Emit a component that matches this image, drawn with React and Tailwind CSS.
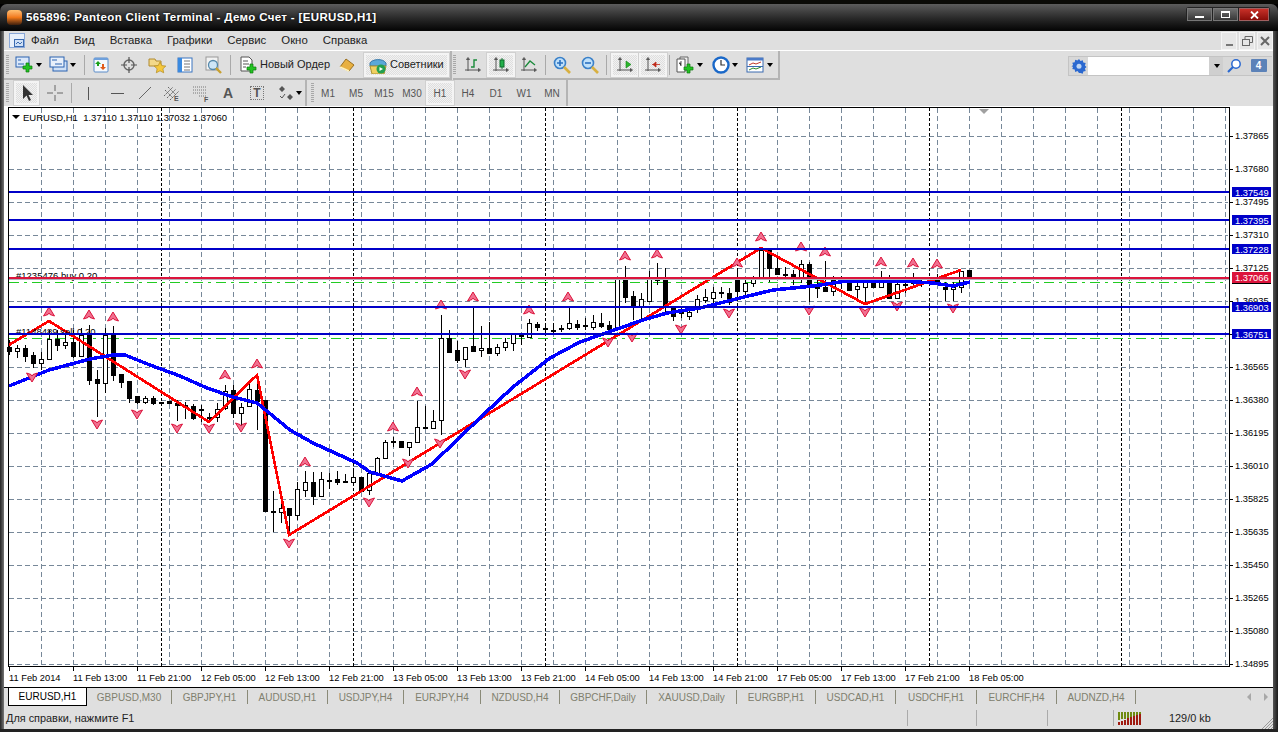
import React from "react";

// [x, bodyTop, bodyBottom, wickTop, wickBottom, black?]
const candles = [
  [9,347,351,340,355,1],[17,348,351,345,358,0],[25,348,356,345,362,1],[33,355,363,352,368,1],[41,359,363,352,370,0],
  [49,339,359,330,359,0],[57,339,345,330,351,1],[65,342,345,333,349,0],[73,342,356,330,358,1],[81,335,356,328,356,0],
  [89,335,380,325,385,1],[97,379,383,370,417,1],[105,335,383,328,393,0],[113,335,375,326,381,1],[121,374,382,374,388,1],
  [129,381,398,381,403,1],[137,396,402,396,404,1],[145,398,402,396,404,0],[153,398,403,396,405,1],[161,402,403,402,403,1],
  [169,401,403,401,403,1],[177,403,405,400,421,1],[185,405,406,402,419,1],[193,406,418,404,420,1],[201,409,410,405,422,1],
  [209,417,418,413,422,1],[217,409,417,403,422,0],[225,391,408,385,410,0],[233,390,413,385,418,1],[241,407,413,403,429,0],
  [249,389,406,382,406,0],[257,390,401,375,430,1],[265,400,511,400,511,1],[273,511,512,491,532,1],[281,508,512,498,523,0],
  [289,508,515,508,535,1],[297,489,515,482,520,0],[305,482,490,471,497,0],[313,482,496,472,505,1],[321,479,496,472,497,0],
  [329,480,481,473,489,1],[337,479,482,471,485,1],[345,481,482,474,483,1],[353,477,482,468,485,0],[361,477,491,477,491,1],
  [369,473,490,470,495,0],[377,458,473,457,473,0],[385,442,458,440,458,0],[393,441,442,437,447,0],[401,441,447,441,448,1],
  [409,442,447,442,456,0],[417,427,442,401,442,0],[425,427,428,406,428,1],[433,421,428,410,428,0],[441,338,420,315,435,0],
  [449,338,352,330,353,1],[457,350,360,341,363,1],[465,347,359,347,367,0],[473,346,351,307,351,1],[481,348,350,326,357,0],
  [489,348,353,322,353,1],[497,347,353,344,356,0],[505,342,347,338,351,0],[513,334,343,333,351,0],[521,334,336,333,345,1],
  [529,323,337,319,338,0],[537,324,327,322,331,1],[545,328,329,326,333,1],[553,330,331,323,334,1],[561,328,329,325,332,1],
  [569,323,328,308,330,0],[577,324,327,320,330,1],[585,325,326,318,330,1],[593,322,327,315,330,0],[601,323,326,313,328,1],
  [609,325,329,321,333,1],[617,278,328,278,329,0],[625,278,297,266,303,1],[633,296,306,291,320,1],[641,299,306,293,320,0],
  [649,278,301,271,302,0],[657,279,280,263,285,1],[665,279,306,268,313,1],[673,308,316,308,321,1],[681,312,313,306,318,1],
  [689,312,316,308,320,0],[697,299,307,295,313,0],[705,297,300,289,303,0],[713,292,298,287,303,0],[721,292,293,287,298,1],
  [729,293,302,288,305,1],[737,278,291,268,297,1],[745,283,291,278,295,0],[753,278,283,276,287,0],[761,250,277,248,278,0],
  [769,250,268,248,282,1],[777,268,274,258,275,1],[785,274,275,267,278,1],[793,274,279,270,285,1],[801,264,279,260,283,0],
  [809,264,285,262,302,1],[817,285,288,278,298,1],[825,287,291,261,291,1],[833,280,291,276,296,0],[841,278,281,276,289,1],
  [849,281,290,280,291,1],[857,286,289,279,298,0],[865,282,287,280,304,0],[873,283,287,278,287,1],[881,280,287,271,287,0],
  [889,280,298,275,298,1],[897,284,298,279,298,0],[905,284,285,278,293,1],[913,281,283,273,288,1],[921,282,283,277,287,1],
  [929,281,282,280,285,1],[937,280,281,274,285,1],[945,287,289,282,301,1],[953,287,289,282,301,0],[961,271,287,271,293,0],
  [969,270,278,270,283,1],
];

const zigzag = "9,345 49,321 209,422 257,375 289,535 761,248 865,304 961,270";
const ma = "9,386 49,370 90,359 113,355 125,355 150,365 180,376 207,388 233,397 257,403 290,430 313,443 357,463 370,472 402,481 432,464 457,440 483,415 513,387 550,358 580,342 600,335 620,328 643,320 667,313 700,308 740,298 773,290 813,286 847,281 900,281 933,283 953,286 970,282";

const upMarks = [[49,312],[89,315],[113,317],[225,375],[257,364],[305,462],[393,427],[417,392],[441,305],[473,297],[529,310],[568,297],[625,256],[657,254],[737,263],[761,237],[801,247],[825,252],[881,262],[913,263],[937,264]];
const downMarks = [[32,377],[97,424],[137,414],[177,428],[209,428],[241,427],[289,543],[369,502],[408,463],[440,443],[465,374],[608,342],[632,337],[681,329],[729,313],[809,310],[865,312],[897,306],[953,308]];

const axisLabels = ["1.37865","1.37680","1.37495","1.37310","1.37125","1.36935","1.36750","1.36565","1.36380","1.36195","1.36010","1.35825","1.35635","1.35450","1.35265","1.35080","1.34895"];
const timeLabels = ["11 Feb 2014","11 Feb 13:00","11 Feb 21:00","12 Feb 05:00","12 Feb 13:00","12 Feb 21:00","13 Feb 05:00","13 Feb 13:00","13 Feb 21:00","14 Feb 05:00","14 Feb 13:00","14 Feb 21:00","17 Feb 05:00","17 Feb 13:00","17 Feb 21:00","18 Feb 05:00"];
const priceLines = [[192,"1.37549"],[220,"1.37395"],[249,"1.37228"],[307,"1.36903"],[334,"1.36751"]];

const tabs = [
  ["GBPUSD,M30","w-[85px]"],["GBPJPY,H1","w-[76px]"],["AUDUSD,H1","w-[80px]"],["USDJPY,H4","w-[76px]"],["EURJPY,H4","w-[77px]"],
  ["NZDUSD,H4","w-[79px]"],["GBPCHF,Daily","w-[87px]"],["XAUUSD,Daily","w-[90px]"],["EURGBP,H1","w-[79px]"],["USDCAD,H1","w-[80px]"],
  ["USDCHF,H1","w-[81px]"],["EURCHF,H4","w-[80px]"],["AUDNZD,H4","w-[79px]"],
];

const Chart = () => {
  const gridY = axisLabels.map((_, i) => 136 + i * 33);
  const gridX = Array.from({ length: 38 }, (_, i) => 41 + i * 32);
  const dayX = [161, 353, 545, 737, 929, 1121];
  return (
    <svg width="1269" height="581" viewBox="4 106 1269 581" className="block bg-white">
      <g shapeRendering="crispEdges">
        {gridY.map((y) => (
          <line key={y} x1="9" x2="1228" y1={y + 0.5} y2={y + 0.5} stroke="#778899" strokeDasharray="5 3" />
        ))}
        {gridX.map((x) => (
          <line key={x} x1={x + 0.5} x2={x + 0.5} y1="108" y2="666" stroke="#778899" strokeDasharray="5 3" />
        ))}
        {dayX.map((x) => (
          <line key={x} x1={x + 0.5} x2={x + 0.5} y1="108" y2="666" stroke="#000" strokeDasharray="3 2" />
        ))}
        <line x1="9" x2="1228" y1="282.5" y2="282.5" stroke="#22cc22" strokeDasharray="10 5 3 5" />
        <line x1="9" x2="1228" y1="338.5" y2="338.5" stroke="#22cc22" strokeDasharray="10 5 3 5" />
        {candles.map(([x, t, b, wt, wb, black]) => (
          <g key={x}>
            <line x1={x + 0.5} x2={x + 0.5} y1={wt} y2={wb} stroke="#000" />
            <rect x={x - 2 + 0.5} y={t + 0.5} width="4" height={Math.max(b - t, 1)} fill={black ? "#000" : "#fff"} stroke="#000" />
          </g>
        ))}
        <polyline points={zigzag} fill="none" stroke="#ff0000" strokeWidth="2.7" />
        <polyline points={ma} fill="none" stroke="#0000ff" strokeWidth="3.5" />
      </g>
      {upMarks.map(([x, y]) => (
        <path key={x} transform={`translate(${x} ${y})`} d="M0 -5 L5.500 4 L1 2.500 L0 1 L-1 2.500 L-5.500 4Z" fill="#f07090" stroke="#dc143c" strokeWidth="1" strokeLinejoin="round" />
      ))}
      {downMarks.map(([x, y]) => (
        <path key={x} transform={`translate(${x} ${y})`} d="M0 5 L5.500 -4 L1 -2.500 L0 -1 L-1 -2.500 L-5.500 -4Z" fill="#f07090" stroke="#dc143c" strokeWidth="1" strokeLinejoin="round" />
      ))}
      <g fontFamily="'Liberation Sans', sans-serif" fontSize="9.5" fill="#000">
        <text x="16" y="279">#1235476 buy 0.20</text>
        <text x="16" y="335">#1148489 sell 0.20</text>
        <path d="M12 115h8l-4 4z" fill="#000" />
        <text x="23" y="120.500" xmlSpace="preserve">EURUSD,H1  1.37110 1.37110 1.37032 1.37060</text>
      </g>
      <path d="M979 109h10l-5 5z" fill="#a0a0a0" />
      <g shapeRendering="crispEdges">
        {priceLines.map(([y]) => (
          <rect key={y} x="9" y={y - 1} width="1220" height="2" fill="#0000c8" />
        ))}
        <rect x="9" y="277" width="1220" height="2" fill="#dc143c" />
        <rect x="9" y="279" width="1220" height="1" fill="#b0b0b8" />
        <rect x="8.500" y="107.500" width="1221" height="559" fill="none" stroke="#000" />
        {gridY.map((y) => (
          <line key={y} x1="1229" x2="1233" y1={y + 0.5} y2={y + 0.5} stroke="#000" />
        ))}
        {timeLabels.map((_, i) => (
          <line key={i} x1={9.5 + i * 64} x2={9.5 + i * 64} y1="667" y2="671" stroke="#000" />
        ))}
      </g>
      <g fontFamily="'Liberation Sans', sans-serif" fontSize="9.3" fill="#000">
        {axisLabels.map((t, i) => (
          <text key={t} x="1235" y={gridY[i] + 3}>{t}</text>
        ))}
        {timeLabels.map((t, i) => (
          <text key={t} x={9 + i * 64} y="681">{t}</text>
        ))}
      </g>
      {priceLines.map(([y, t]) => (
        <g key={y}>
          <rect x="1232" y={y - 5} width="39" height="10" fill="#0000c8" shapeRendering="crispEdges" />
          <text x="1235" y={y + 3.5} fill="#fff" fontFamily="'Liberation Sans', sans-serif" fontSize="9.3">{t}</text>
        </g>
      ))}
      <rect x="1232" y="272" width="39" height="11" fill="#dc143c" shapeRendering="crispEdges" />
      <rect x="1232" y="283" width="39" height="1" fill="#000" shapeRendering="crispEdges" />
      <text x="1235" y="281" fill="#fff" fontFamily="'Liberation Sans', sans-serif" fontSize="9.3">1.37066</text>
    </svg>
  );
};

const Caret = () => <span className="w-0 h-0 border-x-[3.5px] border-t-[4px] border-x-transparent border-t-black ml-[2px]" />;
const Grip = ({ className = "mr-[3px]" }) => (
  <div className={`w-[3px] h-[20px] shrink-0 bg-[repeating-linear-gradient(#a8a8a8_0_1px,transparent_1px_2px)] ${className}`} />
);
const Sep = ({ className }) => <div className={`w-[1px] h-[20px] shrink-0 bg-[#a9a9a9] ${className}`} />;

const Btn = ({ className = "w-[28px]", active, children }) => (
  <div className={`h-[24px] flex items-center justify-center shrink-0 text-[#555] text-[10px] ${active ? "bg-[repeating-conic-gradient(#f2f2f2_0_25%,#dedede_0_50%)] bg-[length:2px_2px] border-2 border-[#f4f4f4] outline-1 outline-[#d0d0d0]" : ""} ${className}`}>
    {children}
  </div>
);

const Ico = ({ w = 18, h = 18, children }) => (
  <svg width={w} height={h} viewBox={`0 0 ${w} ${h}`} className="shrink-0">{children}</svg>
);

const Plus = ({ x = 9, y = 8 }) => (
  <path transform={`translate(${x} ${y})`} d="M3 0h3v3h3v3h-3v3h-3v-3h-3v-3h3z" fill="#22c322" stroke="#0c7a0c" strokeWidth="0.7" />
);

const Axes = ({ children }) => (
  <Ico>
    <path d="M4 2v13M1 14h15M4 1.500l-1.500 2h3zM16.500 14l-2-1.500v3z" stroke="#555" fill="none" strokeWidth="1" />
    {children}
  </Ico>
);

const Toolbar1 = () => (
  <div className="h-[29px] shrink-0 flex items-center">
    <div className="h-[29px] flex items-center border-r-2 border-b-2 border-[#b4b4b4] pl-[2px] pr-[1px]">
      <Grip />
      <Btn className="w-[33px]">
        <Ico w={19}><rect x="1" y="1" width="13" height="10" fill="#dbe8fa" stroke="#2b62b0" /><path d="M3 4h3M3 8h6" stroke="#2b62b0" /><Plus x={8} y={7} /></Ico><Caret />
      </Btn>
      <Btn className="w-[34px]">
        <Ico w={19}><rect x="4" y="5" width="14" height="10" fill="#cfe0f6" stroke="#2b62b0" /><rect x="1" y="1" width="14" height="10" fill="#e8f0fb" stroke="#2b62b0" /><path d="M3 4h5M6 8h7" stroke="#2b62b0" /></Ico><Caret />
      </Btn>
      <Sep className="ml-[5px] mr-[2px]" />
      <Btn>
        <Ico><rect x="2" y="2" width="14" height="14" rx="1" fill="#f4f8fd" stroke="#5b8cc8" /><rect x="2" y="2" width="14" height="2" fill="#6ea0dc" /><path d="M6 5l3 3H7v2H5V8H3z" fill="#1aa01a" /><path d="M11 14l-3-3h2V8h2v3h2z" fill="#e05a1a" /></Ico>
      </Btn>
      <Btn>
        <Ico><circle cx="9" cy="9" r="5" fill="none" stroke="#666" strokeWidth="1.400" /><path d="M9 1v6M9 11v6M1 9h6M11 9h6" stroke="#555" strokeWidth="1.200" /></Ico>
      </Btn>
      <Btn>
        <Ico><path d="M1 3h6l1 2h5v5H1z" fill="#f3d98a" stroke="#b08a30" /><path d="M12 6l1.800 3.600 4 .5-2.900 2.700.8 4-3.700-2-3.700 2 .8-4-2.900-2.700 4-.5z" fill="#f6c83c" stroke="#b08a20" strokeWidth="0.7" /></Ico>
      </Btn>
      <Btn>
        <Ico><rect x="2" y="2" width="14" height="14" fill="#fff" stroke="#3a74c0" /><rect x="2" y="2" width="4" height="14" fill="#3a8ae0" /><path d="M8 5h6M8 8h6M8 11h6M8 14h6" stroke="#777" /></Ico>
      </Btn>
      <Btn>
        <Ico><rect x="2" y="1" width="12" height="13" fill="#f2f2f2" stroke="#999" /><circle cx="9" cy="9" r="4.500" fill="#cfe6f7" stroke="#5588aa" strokeWidth="1.300" /><path d="M12 12l5 5" stroke="#c8a030" strokeWidth="2.400" /></Ico>
      </Btn>
      <Sep className="ml-[3px] mr-[4px]" />
      <Btn className="w-[97px] justify-start !text-[#222] !text-[11px] pl-[4px] gap-[3px] whitespace-nowrap">
        <Ico w={18}><path d="M2 1h8l3 3v11H2z" fill="#fff" stroke="#555" /><path d="M4 5h5M4 8h6M4 11h3" stroke="#555" /><Plus x={8} y={8} /></Ico>
        <span>Новый Ордер</span>
      </Btn>
      <Btn className="w-[30px]">
        <Ico><path d="M2 11L8 3l8 6-5 6z" fill="#e8b040" stroke="#9a7020" /><path d="M2 11l9 4" stroke="#fff3c0" strokeWidth="1.500" /></Ico>
      </Btn>
      <Btn active className="w-[85px] ml-[2px] justify-start pl-[2px] gap-[2px] !text-[#222] !text-[11px] whitespace-nowrap">
        <Ico w={20}><path d="M2 7c2-4 13-5 16 0v3H2z" fill="#5aa8d8" stroke="#3a78a8" /><path d="M2 10h16l-2 8H4z" fill="#f0d060" stroke="#a89030" /><circle cx="13" cy="13" r="4.500" fill="#22a050" /><path d="M11.500 11l3.500 2-3.500 2z" fill="#fff" /></Ico>
        <span>Советники</span>
      </Btn>
    </div>
    <div className="h-[29px] flex items-center border-r-2 border-b-2 border-[#b4b4b4] ml-[1px] pr-[2px]">
      <Grip />
      <Btn><Axes><path d="M7 11h3V4h3" stroke="#1a8a3a" fill="none" strokeWidth="1.400" /></Axes></Btn>
      <Btn active><Axes><path d="M10 2v11" stroke="#1a7a3a" /><rect x="8" y="4" width="4" height="7" fill="#22b04a" stroke="#0c6a2a" /></Axes></Btn>
      <Btn><Axes><path d="M5 11l5-6 5 4" stroke="#1a8a3a" fill="none" strokeWidth="1.300" /></Axes></Btn>
      <Sep className="ml-[2px] mr-[2px]" />
      <Btn>
        <Ico><circle cx="7" cy="7" r="5.500" fill="#bfe0fa" stroke="#3a80c8" strokeWidth="1.600" /><path d="M4 7h6M7 4v6" stroke="#2a70c0" strokeWidth="1.600" /><path d="M11 11l6 6" stroke="#d8b040" strokeWidth="2.600" /></Ico>
      </Btn>
      <Btn>
        <Ico><circle cx="7" cy="7" r="5.500" fill="#bfe0fa" stroke="#3a80c8" strokeWidth="1.600" /><path d="M4 7h6" stroke="#2a70c0" strokeWidth="1.600" /><path d="M11 11l6 6" stroke="#d8b040" strokeWidth="2.600" /></Ico>
      </Btn>
      <Sep className="ml-[2px] mr-[4px]" />
      <Btn active><Axes><path d="M10 5v7l5-3.500z" fill="#2ab82a" stroke="#14801a" strokeWidth="0.6" /></Axes></Btn>
      <Btn active><Axes><path d="M8 8.500h8M9 8.500l3-2.500v5z" stroke="#c02a1a" fill="#c02a1a" strokeWidth="0.8" /></Axes></Btn>
      <Sep className="ml-[2px] mr-[2px]" />
      <Btn className="w-[34px]">
        <Ico w={20}><path d="M5 1h8v13H5z" fill="#eee" stroke="#666" /><path d="M2 3h8v13H2z" fill="#fff" stroke="#555" /><path d="M4 7h2v3M6 5v2" stroke="#555" /><Plus x={9} y={8} /></Ico><Caret />
      </Btn>
      <Btn className="w-[34px] ml-[2px]">
        <Ico><circle cx="9" cy="9" r="7.500" fill="#fff" stroke="#1a68c8" strokeWidth="2.400" /><path d="M9 4v5h4" stroke="#333" fill="none" strokeWidth="1.200" /></Ico><Caret />
      </Btn>
      <Btn className="w-[34px]">
        <Ico w={19}><rect x="1" y="2" width="16" height="14" fill="#fff" stroke="#3a6ab0" /><rect x="1" y="2" width="16" height="2.500" fill="#4a7ac8" /><path d="M3 9l4-2 3 1 5-2" stroke="#c03a2a" fill="none" /><path d="M3 14l4-2 3 1 5-2" stroke="#2a8a2a" fill="none" /><path d="M1 10.500h16" stroke="#3a6ab0" /></Ico><Caret />
      </Btn>
    </div>
    <div className="ml-auto mr-[1px] flex items-stretch h-[20px] border-y border-[#c4c4c4] bg-[#d8d8d8]">
      <div className="w-[20px] flex items-center justify-center border-l border-[#c4c4c4]">
        <Ico w={16} h={16}><path d="M8 1l1.500 2 2.300-.8.5 2.400 2.400.5-.8 2.400 1.600 1.500-1.600 1.500.8 2.400-2.400.5-.5 2.300-2.300-.8L8 15l-1.500-1.900-2.300.8-.5-2.300-2.400-.5.8-2.400L.5 8.600 2.100 7.100l-.8-2.400 2.400-.5.5-2.400 2.300.8z" fill="#2a68d0" /><circle cx="8" cy="8.300" r="2.500" fill="#bcd4f4" /></Ico>
      </div>
      <div className="w-[121px] bg-white" />
      <div className="w-[14px] flex items-center justify-center bg-[#cfcfcf]"><Caret /></div>
      <div className="w-[20px] ml-[1px] flex items-center justify-center">
        <Ico w={16} h={16}><circle cx="10" cy="6" r="4.200" fill="#fff" stroke="#2a68d0" strokeWidth="1.500" /><path d="M7 9l-5 5" stroke="#2a68d0" strokeWidth="2.200" /></Ico>
      </div>
      <div className="w-[27px] ml-[1px] flex items-center justify-center">
        <div className="relative w-[16px] h-[13px] bg-[#5c82b8] text-white text-[10px] font-bold flex items-center justify-center rounded-[1px]">4</div>
      </div>
    </div>
  </div>
);

const periods = ["M1", "M5", "M15", "M30", "H1", "H4", "D1", "W1", "MN"];

const Toolbar2 = () => (
  <div className="h-[26px] shrink-0 flex items-center">
    <div className="h-[26px] flex items-center border-r-2 border-[#b4b4b4] pl-[2px] pr-[1px]">
      <Grip />
      <Btn active className="w-[25px] ml-[2px]">
        <Ico w={14} h={18}><path d="M3 1v14l3.500-3.500 2.500 5.500 2-1-2.500-5h4.500z" fill="#333" /></Ico>
      </Btn>
      <Btn className="w-[31px]">
        <Ico w={16} h={16}><path d="M8 0v6M8 10v6M0 8h6M10 8h6" stroke="#666" /></Ico>
      </Btn>
      <Sep className="mx-[1px]" />
      <Btn className="w-[30px]"><div className="w-[1px] h-[13px] bg-[#555]" /></Btn>
      <Btn><div className="w-[13px] h-[1px] bg-[#555]" /></Btn>
      <Btn><Ico w={14} h={14}><path d="M1 13L13 1" stroke="#666" /></Ico></Btn>
      <Btn className="w-[26px]">
        <Ico w={20}><path d="M2 12l9-9M5 14l9-9M8 16l9-9M3 6l8 8M6 3l8 8" stroke="#666" strokeDasharray="2 1" /><text x="12" y="17" fontSize="7" fontWeight="bold" fill="#555" fontFamily="Liberation Sans">E</text></Ico>
      </Btn>
      <Btn className="w-[32px]">
        <Ico w={20}><path d="M2 3h14M2 6h14M2 9h14M8 12h8" stroke="#777" strokeDasharray="1 1" /><text x="13" y="18" fontSize="7" fontWeight="bold" fill="#555" fontFamily="Liberation Sans">F</text></Ico>
      </Btn>
      <Btn className="w-[22px] !text-[14px] font-bold">A</Btn>
      <Btn className="w-[36px]">
        <div className="w-[14px] h-[14px] border border-dotted border-[#777] flex items-center justify-center text-[12px] font-bold leading-none">T</div>
      </Btn>
      <Btn className="w-[29px]">
        <Ico w={16} h={16}><path d="M4 1l3 3-3 3-3-3zM12 9l3 3-3 3-3-3z" fill="#555" /><path d="M2 11l2 2 3-4" stroke="#555" fill="none" /></Ico><Caret />
      </Btn>
    </div>
    <div className="h-[26px] flex items-center border-r-2 border-[#b4b4b4] ml-[4px]">
      <Grip className="mr-0" />
      {periods.map((p) => (
        <Btn key={p} active={p === "H1"}>{p}</Btn>
      ))}
    </div>
  </div>
);

const TabBar = () => (
  <div className="h-[20px] shrink-0 bg-[#dfdfdf] border-t border-black flex items-start pl-[4px] text-[10px] relative">
    <div className="w-[79px] h-[18px] bg-white border-x border-b border-black flex items-center justify-center text-black">EURUSD,H1</div>
    {tabs.map(([t, w]) => (
      <div key={t} className={`${w} h-[14px] mt-[2px] border-r border-[#8a8a78] flex items-center justify-center text-[#80806e]`}>{t}</div>
    ))}
    <div className="ml-auto mr-[5px] mt-[5px] flex gap-[13px]">
      <span className="w-0 h-0 border-y-[4px] border-r-[4px] border-y-transparent border-r-[#a8a8a8]" />
      <span className="w-0 h-0 border-y-[4px] border-l-[4px] border-y-transparent border-l-[#a8a8a8]" />
    </div>
  </div>
);

const Signal = () => (
  <svg width="24" height="13" viewBox="0 0 24 13" shapeRendering="crispEdges" className="shrink-0">
    {Array.from({ length: 8 }, (_, i) => (
      <g key={i}>
        <rect x={i * 3} y="0" width="2" height={8 - i * 0.7} fill="#6f8a10" />
        <rect x={i * 3} y={10 - i * 1.2} width="2" height={3 + i * 1.2} fill="#a01a10" />
      </g>
    ))}
  </svg>
);

const StatusBar = () => (
  <div className="h-[22px] shrink-0 bg-[#dfdfdf] flex items-center text-[10.9px] text-[#222] relative">
    <div className="w-[903px] pl-[2px]">Для справки, нажмите F1</div>
    <div className="w-[69px] h-[16px] border-l border-[#aaa]" />
    <div className="w-[71px] h-[16px] border-l border-[#aaa]" />
    <div className="w-[66px] h-[16px] border-l border-[#aaa]" />
    <div className="h-[16px] border-l border-[#aaa] pl-[4px] flex items-center">
      <Signal />
      <span className="ml-[27px]">129/0 kb</span>
    </div>
    <svg width="12" height="12" viewBox="0 0 12 12" className="absolute right-0 bottom-0">
      <path d="M12 1L1 12M12 4L4 12M12 7L7 12M12 10L10 12" stroke="#999" />
    </svg>
  </div>
);

const WinBtn = ({ className, children }) => (
  <div className={`h-[13px] flex items-center justify-center border border-[#777] bg-gradient-to-b ${className}`}>{children}</div>
);

export default function App() {
  return (
    <div className="w-[1278px] h-[732px] bg-black overflow-hidden flex flex-col font-['Liberation_Sans',sans-serif]">
      <div className="h-[4px] shrink-0 bg-[#0a0a06]" />
      <div className="h-[27px] shrink-0 rounded-t-[7px] bg-gradient-to-b from-[#5c5c5c] via-[#2c2c2c] to-[#050505] flex items-center pl-[7px] pr-[8px] relative">
        <div className="w-[15px] h-[15px] rounded-[4px] bg-gradient-to-b from-[#ffc070] via-[#f07818] to-[#40200c]" />
        <div className="ml-[4px] text-white font-bold text-[11.5px] tracking-[0.35px] [text-shadow:0_0_3px_#000]">565896: Panteon Client Terminal - Демо Счет - [EURUSD,H1]</div>
        <div className="ml-auto flex items-center gap-[1px] p-[1px] mt-[-6px] rounded-[3px] bg-[#222]">
          <WinBtn className="w-[25px] from-[#6e6e6e] to-[#383838]"><div className="w-[9px] h-[2px] bg-white mt-[5px]" /></WinBtn>
          <WinBtn className="w-[25px] from-[#6e6e6e] to-[#383838]"><div className="w-[9px] h-[7px] border border-t-2 border-white" /></WinBtn>
          <WinBtn className="w-[30px] from-[#c83028] to-[#8a0c08] !border-[#a06060]">
            <svg width="9" height="8" viewBox="0 0 9 8"><path d="M1 0.500l7 7M8 0.500l-7 7" stroke="#fff" strokeWidth="1.800" /></svg>
          </WinBtn>
        </div>
      </div>
      <div className="flex-1 flex min-h-0">
        <div className="w-[4px] shrink-0 bg-gradient-to-r from-[#262626] to-[#777]" />
        <div className="w-[1269px] shrink-0 flex flex-col bg-[#dfdfdf]">
          <div className="h-[19px] shrink-0 flex items-center text-[11.4px] text-[#222] relative">
            <div className="w-[16px] h-[15px] ml-[5px] mr-[6px] border border-[#8aa8d8] bg-[#e8f0fb] flex items-end justify-end">
              <svg width="10" height="8" viewBox="0 0 10 8"><rect x="0.500" y="0.500" width="9" height="7" fill="#cfe0f6" stroke="#3a6ab0" /><path d="M2 5l2-2 2 2 2-2" stroke="#3a6ab0" fill="none" /></svg>
            </div>
            <div className="flex gap-[15px]">
              <span>Файл</span><span>Вид</span><span>Вставка</span><span>Графики</span><span>Сервис</span><span>Окно</span><span>Справка</span>
            </div>
            <div className="ml-auto flex gap-[2px] text-[#666]">
              {[
                <div key="a" className="w-[7px] h-[2px] bg-[#777] mt-[8px]" />,
                <svg key="b" width="11" height="10" viewBox="0 0 11 10" fill="none" stroke="#666"><rect x="0.500" y="3.500" width="7" height="6" /><path d="M3 3V0.500h7.500v6H8" /></svg>,
                <svg key="c" width="10" height="10" viewBox="0 0 10 10"><path d="M1 1l8 8M9 1l-8 8" stroke="#666" strokeWidth="2" /></svg>,
              ].map((icon, i) => (
                <div key={i} className="w-[16px] h-[18px] bg-[#e6e6e6] border border-[#f4f4f4] flex items-center justify-center">{icon}</div>
              ))}
            </div>
          </div>
          <div className="h-[1px] bg-white shrink-0" />
          <Toolbar1 />
          <Toolbar2 />
          <Chart />
          <TabBar />
          <StatusBar />
        </div>
        <div className="w-[5px] shrink-0 bg-gradient-to-r from-[#555] to-[#1a1a1a]" />
      </div>
      <div className="h-[3px] shrink-0 bg-[#222]" />
    </div>
  );
}
